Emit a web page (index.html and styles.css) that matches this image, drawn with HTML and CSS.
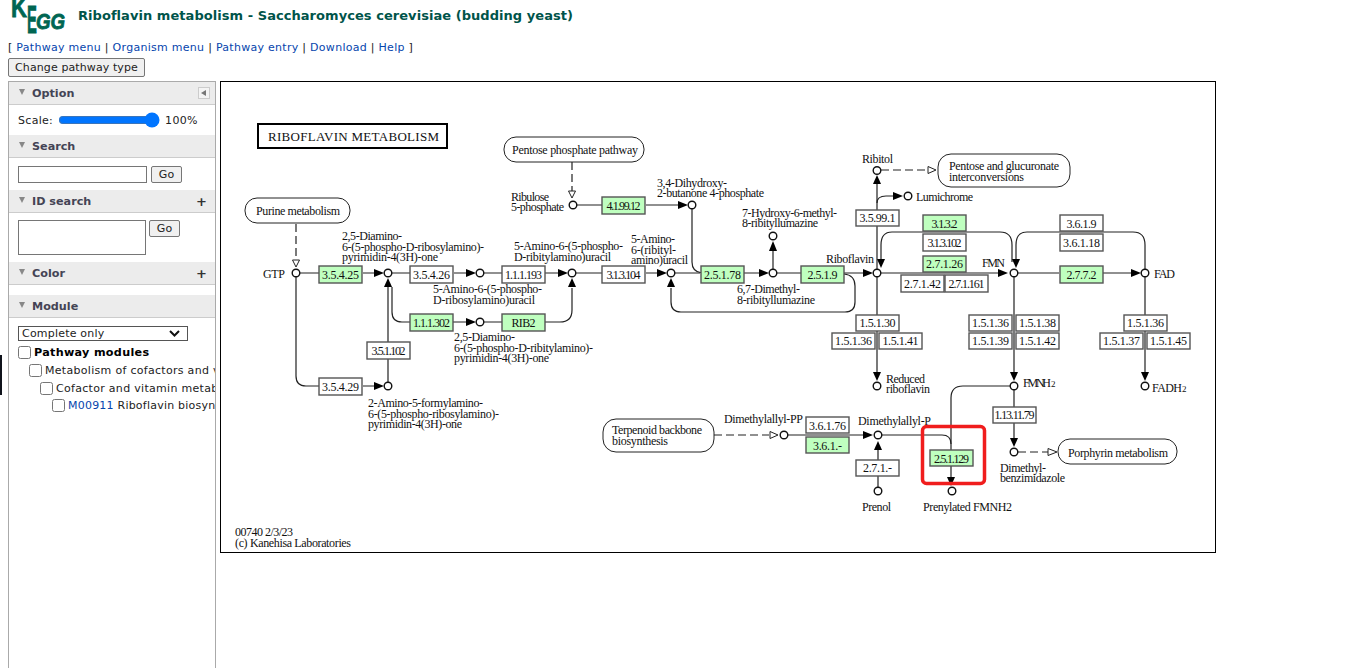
FILE: index.html
```html
<!DOCTYPE html>
<html lang="en">
<head>
<meta charset="utf-8">
<title>Riboflavin metabolism</title>
<link rel="stylesheet" href="styles.css">
</head>
<body>
<header class="head">
  <div class="logo"><span class="lk">K</span><span class="le">E</span><span class="lg">GG</span></div>
  <h1 class="title">Riboflavin metabolism - Saccharomyces cerevisiae (budding yeast)</h1>
</header>
<nav class="nav">[ <a>Pathway menu</a> | <a>Organism menu</a> | <a>Pathway entry</a> | <a>Download</a> | <a>Help</a> ]</nav>
<button class="change">Change pathway type</button>
<div class="main">
  <aside class="side">
    <div class="sec"><span class="tri"></span>Option<span class="collapse"></span></div>
    <div class="scale"><span>Scale:</span><input class="range" type="range" min="0" max="100" value="100"><span>100%</span></div>
    <div class="sec"><span class="tri"></span>Search</div>
    <div class="row search"><input class="txt" type="text"><button class="go">Go</button></div>
    <div class="sec"><span class="tri"></span>ID search<b class="plus">+</b></div>
    <div class="row ids"><textarea class="area"></textarea><button class="go">Go</button></div>
    <div class="sec"><span class="tri"></span>Color<b class="plus">+</b></div>
    <div class="gap"></div>
    <div class="sec"><span class="tri"></span>Module</div>
    <div class="mod">
      <select class="sel"><option>Complete only</option></select>
      <label class="tree t0"><input type="checkbox"><b>Pathway modules</b></label>
      <label class="tree t1"><input type="checkbox"><span>Metabolism of cofactors and vitamins</span></label>
      <label class="tree t2"><input type="checkbox"><span>Cofactor and vitamin metabolism</span></label>
      <label class="tree t3"><input type="checkbox"><span><a>M00911</a> Riboflavin biosynthesis</span></label>
    </div>
  </aside>
  <div class="map">
    <svg class="pathway" width="994" height="470" viewBox="221 82 994 470">
      <g class="edges">
        <path d="M300 273H319M363 273H376M392 273H410M454 273H468M484 273H502M545 273H560M576 273H602M646 273H660M675 273H692Q700 273 700 273M744 273H762M777 273H801M844 273H865M881 273H1000M1018 273H1059M1103 273H1134"/>
        <path d="M692 209V262Q692 272 702 273"/>
        <path d="M296 277V376Q296 386 306 386H319M363 386H376"/>
        <path d="M388 382V359M388 342V287"/>
        <path d="M410 322H402Q392 322 392 312V287"/>
        <path d="M453 322H468M484 322H502M545 322H560Q572 322 572 310V288"/>
        <path d="M577 205H602M646 205H680"/>
        <path d="M773 269V250"/>
        <path d="M844 274Q855 275 855 286V302Q855 312 845 312H681Q671 312 671 302V288"/>
        <path d="M877 269V225M877 210V184"/>
        <path d="M877 203Q877 196 886 196H895"/>
        <path d="M1012 262V245Q1012 232 1000 232H892Q881 232 881 245V259"/>
        <path d="M1145 269V245Q1145 232 1133 232H1027Q1016 232 1016 245V259"/>
        <path d="M877 277V372M1014 277V372M1145 277V372"/>
        <path d="M1010 386H963Q951 386 951 398V450M951 466V478"/>
        <path d="M882 435H942Q951 435 951 444"/>
        <path d="M1014 390V407M1014 422V438"/>
        <path d="M788 435H864"/>
        <path d="M878 487V476M878 460V450"/>
      </g>
      <g class="dash">
        <path d="M296 224V260"/>
        <path d="M572 162V192"/>
        <path d="M881 170H928"/>
        <path d="M1018 452H1048"/>
        <path d="M714 435H769"/>
      </g>
      <g class="hollow">
        <path d="M292.500 260H299.500L296 267Z"/>
        <path d="M568.500 191H575.500L572 198Z"/>
        <path d="M928 166.500V173.500L936 170Z"/>
        <path d="M1048 448.500V455.500L1057 452Z"/>
        <path d="M770 431.500V438.500L778 435Z"/>
      </g>
      <g class="heads">
        <path d="M374 269V277L384 273Z"/><path d="M466 269V277L476 273Z"/><path d="M558 269V277L568 273Z"/><path d="M657 269V277L667 273Z"/>
        <path d="M759 269V277L769 273Z"/><path d="M863 269V277L873 273Z"/><path d="M998 269V277L1008 273Z"/><path d="M1131 269V277L1141 273Z"/>
        <path d="M466 318V326L476 322Z"/><path d="M374 382V390L384 386Z"/><path d="M678 201V209L688 205Z"/><path d="M893 192V200L903 196Z"/>
        <path d="M863 431V439L873 435Z"/>
        <path d="M384 287H392L388 278Z"/><path d="M568 287H576L572 278Z"/><path d="M667 287H675L671 278Z"/><path d="M769 251H777L773 241Z"/>
        <path d="M873 184H881L877 175Z"/><path d="M874 450H882L878 441Z"/>
        <path d="M877 259H885L881 268Z"/><path d="M1012 259H1020L1016 268Z"/>
        <path d="M873 372H881L877 381Z"/><path d="M1010 372H1018L1014 381Z"/><path d="M1141 372H1149L1145 381Z"/><path d="M1010 438H1018L1014 447Z"/><path d="M947 477H955L951 486Z"/>
      </g>
      <g class="nodes">
        <circle cx="296" cy="273" r="3.800"/><circle cx="388" cy="273" r="3.800"/><circle cx="480" cy="273" r="3.800"/><circle cx="572" cy="273" r="3.800"/>
        <circle cx="671" cy="273" r="3.800"/><circle cx="773" cy="273" r="3.800"/><circle cx="877" cy="273" r="3.800"/><circle cx="1014" cy="273" r="3.800"/>
        <circle cx="1145" cy="273" r="3.800"/><circle cx="877" cy="170.500" r="3.800"/><circle cx="908" cy="196" r="3.800"/><circle cx="480" cy="322" r="3.800"/>
        <circle cx="388" cy="386" r="3.800"/><circle cx="573" cy="205" r="3.800"/><circle cx="692" cy="205" r="3.800"/><circle cx="773" cy="236" r="3.800"/>
        <circle cx="877" cy="386" r="3.800"/><circle cx="1014" cy="386" r="3.800"/><circle cx="1145" cy="386" r="3.800"/><circle cx="1014" cy="452" r="3.800"/>
        <circle cx="878" cy="435" r="3.800"/><circle cx="878" cy="491" r="3.800"/><circle cx="952" cy="491" r="3.800"/><circle cx="784" cy="435" r="3.800"/>
      </g>
      <g class="bubbles">
        <rect x="245" y="198" width="105" height="25" rx="12"/>
        <rect x="504" y="137" width="140" height="25" rx="12"/>
        <rect x="938" y="154" width="132" height="33" rx="13"/>
        <rect x="603" y="419" width="111" height="33" rx="13"/>
        <rect x="1058" y="439" width="119" height="25" rx="12"/>
      </g>
      <rect class="maptitle" x="258" y="124" width="189" height="24"/>
      <g class="boxes">
        <rect x="319" y="266" width="43" height="17" class="hit"/><rect x="410" y="266" width="43" height="17"/><rect x="502" y="266" width="43" height="17"/>
        <rect x="410" y="314" width="43" height="17" class="hit"/><rect x="502" y="314" width="43" height="17" class="hit"/><rect x="367" y="342" width="43" height="17"/>
        <rect x="319" y="378" width="43" height="17"/><rect x="602" y="197" width="43" height="17" class="hit"/><rect x="602" y="266" width="43" height="17"/>
        <rect x="701" y="266" width="43" height="17" class="hit"/><rect x="801" y="266" width="43" height="17" class="hit"/><rect x="856" y="210" width="43" height="16"/>
        <rect x="923" y="215" width="43" height="16" class="hit"/><rect x="923" y="234" width="43" height="17"/><rect x="923" y="256" width="43" height="16" class="hit"/>
        <rect x="901" y="275" width="43" height="17"/><rect x="945" y="275" width="43" height="17"/><rect x="1060" y="215" width="43" height="16"/>
        <rect x="1060" y="234" width="43" height="17"/><rect x="1060" y="266" width="43" height="17" class="hit"/><rect x="856" y="315" width="43" height="16"/>
        <rect x="832" y="333" width="43" height="16"/><rect x="879" y="333" width="43" height="16"/><rect x="969" y="315" width="43" height="16"/>
        <rect x="1016" y="315" width="43" height="16"/><rect x="969" y="333" width="43" height="16"/><rect x="1016" y="333" width="43" height="16"/>
        <rect x="1124" y="315" width="43" height="16"/><rect x="1100" y="333" width="43" height="16"/><rect x="1147" y="333" width="43" height="16"/>
        <rect x="993" y="407" width="43" height="16"/><rect x="806" y="417" width="43" height="16"/><rect x="806" y="437" width="43" height="16" class="hit"/>
        <rect x="856" y="460" width="43" height="16"/><rect x="930" y="450" width="43" height="16" class="hit"/>
      </g>
      <g class="eclabels">
        <text x="340.500" y="278.500" textLength="37">3.5.4.25</text><text x="431.500" y="278.500" textLength="37">3.5.4.26</text><text x="523.500" y="278.500" textLength="37">1.1.1.193</text>
        <text x="431.500" y="326.500" textLength="37">1.1.1.302</text><text x="523.500" y="326.500" textLength="24">RIB2</text><text x="388.500" y="354.500" textLength="34">3.5.1.102</text>
        <text x="340.500" y="390.500" textLength="37">3.5.4.29</text><text x="623.500" y="209.500" textLength="34">4.1.99.12</text><text x="623.500" y="278.500" textLength="34">3.1.3.104</text>
        <text x="722.500" y="278.500" textLength="37">2.5.1.78</text><text x="822.500" y="278.500" textLength="30">2.5.1.9</text><text x="877.500" y="222" textLength="36">3.5.99.1</text>
        <text x="944.500" y="227.500" textLength="26">3.1.3.2</text><text x="944.500" y="246.500" textLength="34">3.1.3.102</text><text x="944.500" y="268" textLength="37">2.7.1.26</text>
        <text x="922.500" y="287.500" textLength="37">2.7.1.42</text><text x="966.500" y="287.500" textLength="36">2.7.1.161</text><text x="1081.500" y="227.500" textLength="30">3.6.1.9</text>
        <text x="1081.500" y="246.500" textLength="37">3.6.1.18</text><text x="1081.500" y="278.500" textLength="30">2.7.7.2</text><text x="877.500" y="327" textLength="36">1.5.1.30</text>
        <text x="853.500" y="345" textLength="37">1.5.1.36</text><text x="900.500" y="345" textLength="36">1.5.1.41</text><text x="990.500" y="327" textLength="37">1.5.1.36</text>
        <text x="1037.500" y="327" textLength="37">1.5.1.38</text><text x="990.500" y="345" textLength="37">1.5.1.39</text><text x="1037.500" y="345" textLength="37">1.5.1.42</text>
        <text x="1145.500" y="327" textLength="37">1.5.1.36</text><text x="1121.500" y="345" textLength="37">1.5.1.37</text><text x="1168.500" y="345" textLength="37">1.5.1.45</text>
        <text x="1014.500" y="419" textLength="40">1.13.11.79</text><text x="827.500" y="429.500" textLength="37">3.6.1.76</text><text x="827.500" y="449.500" textLength="29">3.6.1.-</text>
        <text x="877.500" y="472" textLength="29">2.7.1.-</text><text x="951.500" y="462.500" textLength="35">2.5.1.129</text>
      </g>
      <g class="labels">
        <text x="268" y="141" textLength="171" class="big">RIBOFLAVIN METABOLISM</text>
        <text x="256" y="215" textLength="84">Purine metabolism</text>
        <text x="512" y="154" textLength="126">Pentose phosphate pathway</text>
        <text x="949" y="170" textLength="110">Pentose and glucuronate</text><text x="949" y="180.500" textLength="75">interconversions</text>
        <text x="612" y="434" textLength="90">Terpenoid backbone</text><text x="612" y="444.500" textLength="56">biosynthesis</text>
        <text x="1068" y="456.500" textLength="100">Porphyrin metabolism</text>
        <text x="263" y="277.500" textLength="22">GTP</text>
        <text x="342" y="240" textLength="60">2,5-Diamino-</text><text x="342" y="250.500" textLength="142">6-(5-phospho-D-ribosylamino)-</text><text x="342" y="261" textLength="96">pyrimidin-4(3H)-one</text>
        <text x="433" y="293" textLength="109">5-Amino-6-(5-phospho-</text><text x="433" y="303.500" textLength="102">D-ribosylamino)uracil</text>
        <text x="454" y="341" textLength="61">2,5-Diamino-</text><text x="454" y="351.500" textLength="139">6-(5-phospho-D-ribitylamino)-</text><text x="454" y="362" textLength="95">pyrimidin-4(3H)-one</text>
        <text x="368" y="407" textLength="115">2-Amino-5-formylamino-</text><text x="368" y="417.500" textLength="131">6-(5-phospho-ribosylamino)-</text><text x="368" y="428" textLength="94">pyrimidin-4(3H)-one</text>
        <text x="235" y="536" textLength="58">00740 2/3/23</text><text x="235" y="546.500" textLength="116">(c) Kanehisa Laboratories</text>
        <text x="511" y="200.500" textLength="38">Ribulose</text><text x="511" y="211" textLength="53">5-phosphate</text>
        <text x="657" y="186.500" textLength="70">3,4-Dihydroxy-</text><text x="657" y="197" textLength="107">2-butanone 4-phosphate</text>
        <text x="742" y="216.500" textLength="95">7-Hydroxy-6-methyl-</text><text x="742" y="227" textLength="76">8-ribityllumazine</text>
        <text x="514" y="250" textLength="109">5-Amino-6-(5-phospho-</text><text x="514" y="260.500" textLength="97">D-ribitylamino)uracil</text>
        <text x="631" y="243" textLength="44">5-Amino-</text><text x="631" y="253.500" textLength="45">6-(ribityl-</text><text x="631" y="264" textLength="57">amino)uracil</text>
        <text x="826" y="263" textLength="48">Riboflavin</text>
        <text x="737" y="293" textLength="63">6,7-Dimethyl-</text><text x="737" y="303.500" textLength="78">8-ribityllumazine</text>
        <text x="862" y="163" textLength="31">Ribitol</text><text x="916" y="200.500" textLength="57">Lumichrome</text>
        <text x="982" y="267" textLength="23">FMN</text><text x="1154" y="277.500" textLength="21">FAD</text>
        <text x="886" y="382.500" textLength="39">Reduced</text><text x="886" y="393" textLength="44">riboflavin</text>
        <text x="1023" y="387" textLength="28">FMNH</text><text x="1051" y="387" class="sub" textLength="6">2</text>
        <text x="1152" y="391.500" textLength="30">FADH</text><text x="1182" y="391.500" class="sub" textLength="6">2</text>
        <text x="858" y="425" textLength="73">Dimethylallyl-P</text><text x="724" y="423" textLength="79">Dimethylallyl-PP</text>
        <text x="1000" y="471.500" textLength="46">Dimethyl-</text><text x="1000" y="482" textLength="65">benzimidazole</text>
        <text x="862" y="510.500" textLength="29">Prenol</text><text x="923" y="510.500" textLength="89">Prenylated FMNH2</text>
      </g>
      <rect class="mark" x="922.500" y="426.500" width="62" height="57" rx="4"/>
    </svg>
  </div>
</div>
<div class="edgebar"></div>
</body>
</html>
```
FILE: styles.css
```css
html, body { margin: 0; padding: 0; background: #fff; }
body { height: 668px; overflow: hidden; font-family: "DejaVu Sans", sans-serif; font-size: 11px; color: #222; position: relative; }

.head { display: flex; height: 38px; padding-left: 10px; gap: 13px; overflow: hidden; }
.logo { position: relative; width: 55px; height: 38px; font-family: "Liberation Sans", sans-serif; font-weight: bold; color: #006652; flex: none; -webkit-text-stroke: .8px #006652; }
.lk { position: absolute; left: 1px; top: -5px; font-size: 27px; line-height: 27px; transform: scaleX(.82); transform-origin: left top; }
.le { position: absolute; left: 17px; top: 0; font-size: 39px; line-height: 39px; transform: scaleX(.38); transform-origin: left top; }
.lg { position: absolute; left: 26px; top: 11px; font-size: 22px; line-height: 22px; font-style: italic; transform: scaleX(.85); transform-origin: left top; }
.title { margin: 8px 0 0; font-size: 13px; line-height: 16px; font-weight: bold; color: #00544a; white-space: nowrap; letter-spacing: .05px; }

.nav { margin: 3px 0 0 8px; line-height: 14px; height: 14px; white-space: nowrap; letter-spacing: .28px; }
.nav a { color: #0645ad; }

.change { display: block; margin: 3px 0 0 8px; width: 137px; height: 19px; padding: 0; font: 11px "DejaVu Sans", sans-serif; letter-spacing: .1px; color: #222; background: #f0f0f0; border: 1px solid #767676; border-radius: 2px; }

.main { display: flex; margin: 4px 0 0 8px; align-items: flex-start; }
.side { width: 206px; height: 587px; flex: none; border-left: 1px solid #aaa; border-right: 1px solid #aaa; border-top: 1px solid #aaa; overflow: hidden; letter-spacing: .3px; }
.sec { display: flex; align-items: center; height: 22px; background: #ececec; border-bottom: 1px solid #ccc; font-weight: bold; font-size: 11.200px; letter-spacing: 0; color: #444455; padding-left: 10px; }
.tri { width: 0; height: 0; border-left: 3.500px solid transparent; border-right: 3.500px solid transparent; border-top: 6px solid #888; margin-right: 7px; margin-bottom: 2px; }
.plus { margin-left: auto; margin-right: 8px; font-size: 13px; color: #333; }
.collapse { margin-left: auto; margin-right: 5px; width: 10px; height: 10px; border: 1px solid #ccc; background: #f4f4f4; position: relative; }
.collapse::after { content: ""; position: absolute; left: 2px; top: 2px; border-right: 5px solid #777; border-top: 3px solid transparent; border-bottom: 3px solid transparent; }

.scale { display: flex; align-items: center; gap: 5px; height: 30px; padding-left: 9px; }
.range { width: 102px; height: 16px; margin: 0; }
.row { display: flex; align-items: flex-start; padding-left: 9px; }
.search { height: 32px; padding-top: 8px; box-sizing: border-box; gap: 4px; }
.ids { height: 49px; padding-top: 7px; box-sizing: border-box; gap: 3px; }
.txt { width: 129px; height: 17px; padding: 0; margin: 0; box-sizing: border-box; border: 1px solid #767676; }
.area { width: 128px; height: 35px; padding: 0; margin: 0; box-sizing: border-box; border: 1px solid #767676; resize: none; }
.go { width: 31px; height: 17px; padding: 0; margin: 0; font: 11px "DejaVu Sans", sans-serif; color: #222; background: #f0f0f0; border: 1px solid #767676; border-radius: 2px; }
.gap { height: 10px; }

.mod { padding: 8px 0 0 9px; white-space: nowrap; }
.sel { display: block; width: 170px; height: 15px; padding: 0 0 0 3px; margin: 0 0 3px; font: 11px "DejaVu Sans", sans-serif; letter-spacing: .2px; color: #222; border: 1px solid #555; border-radius: 0; appearance: none; background: #fff url("data:image/svg+xml,%3Csvg xmlns='http://www.w3.org/2000/svg' width='11' height='7'%3E%3Cpath d='M1 1l4.500 4.500L10 1' fill='none' stroke='%23111' stroke-width='2'/%3E%3C/svg%3E") no-repeat 150px 3px; }
.tree { display: flex; align-items: center; height: 17.700px; }
.tree input { margin: 0 3px 0 0; width: 13px; height: 13px; flex: none; }
.tree b { font-size: 11.200px; color: #000; }
.tree a { color: #0645ad; }
.t1 { padding-left: 11px; }
.t2 { padding-left: 22px; }
.t3 { padding-left: 34px; letter-spacing: .22px; }

.map { width: 994px; height: 470px; margin-left: 4px; border: 1px solid #000; background: #fff; flex: none; }
.pathway { display: block; }
.edges, .dash { fill: none; stroke: #222; stroke-width: 1.200; }
.dash { stroke-dasharray: 8 4; }
.hollow { fill: #fff; stroke: #222; stroke-width: 1; }
.heads { fill: #000; }
.nodes circle { fill: #fff; stroke: #111; stroke-width: 1.400; }
.bubbles rect { fill: #fff; stroke: #222; stroke-width: 1; }
.maptitle { fill: #fff; stroke: #000; stroke-width: 2; }
.boxes rect { fill: #fff; stroke: #555; stroke-width: 1.400; }
.boxes rect.hit { fill: #bfffbf; }
.eclabels text, .labels text { font-family: "Liberation Serif", serif; font-size: 12px; fill: #111; }
.eclabels text { text-anchor: middle; }
.labels .big { font-size: 13px; }
.labels .sub { font-size: 9px; }
.mark { fill: none; stroke: #f01d1d; stroke-width: 3.500; }

.edgebar { position: absolute; left: 0; top: 355px; width: 2px; height: 40px; background: #10131c; }
```
